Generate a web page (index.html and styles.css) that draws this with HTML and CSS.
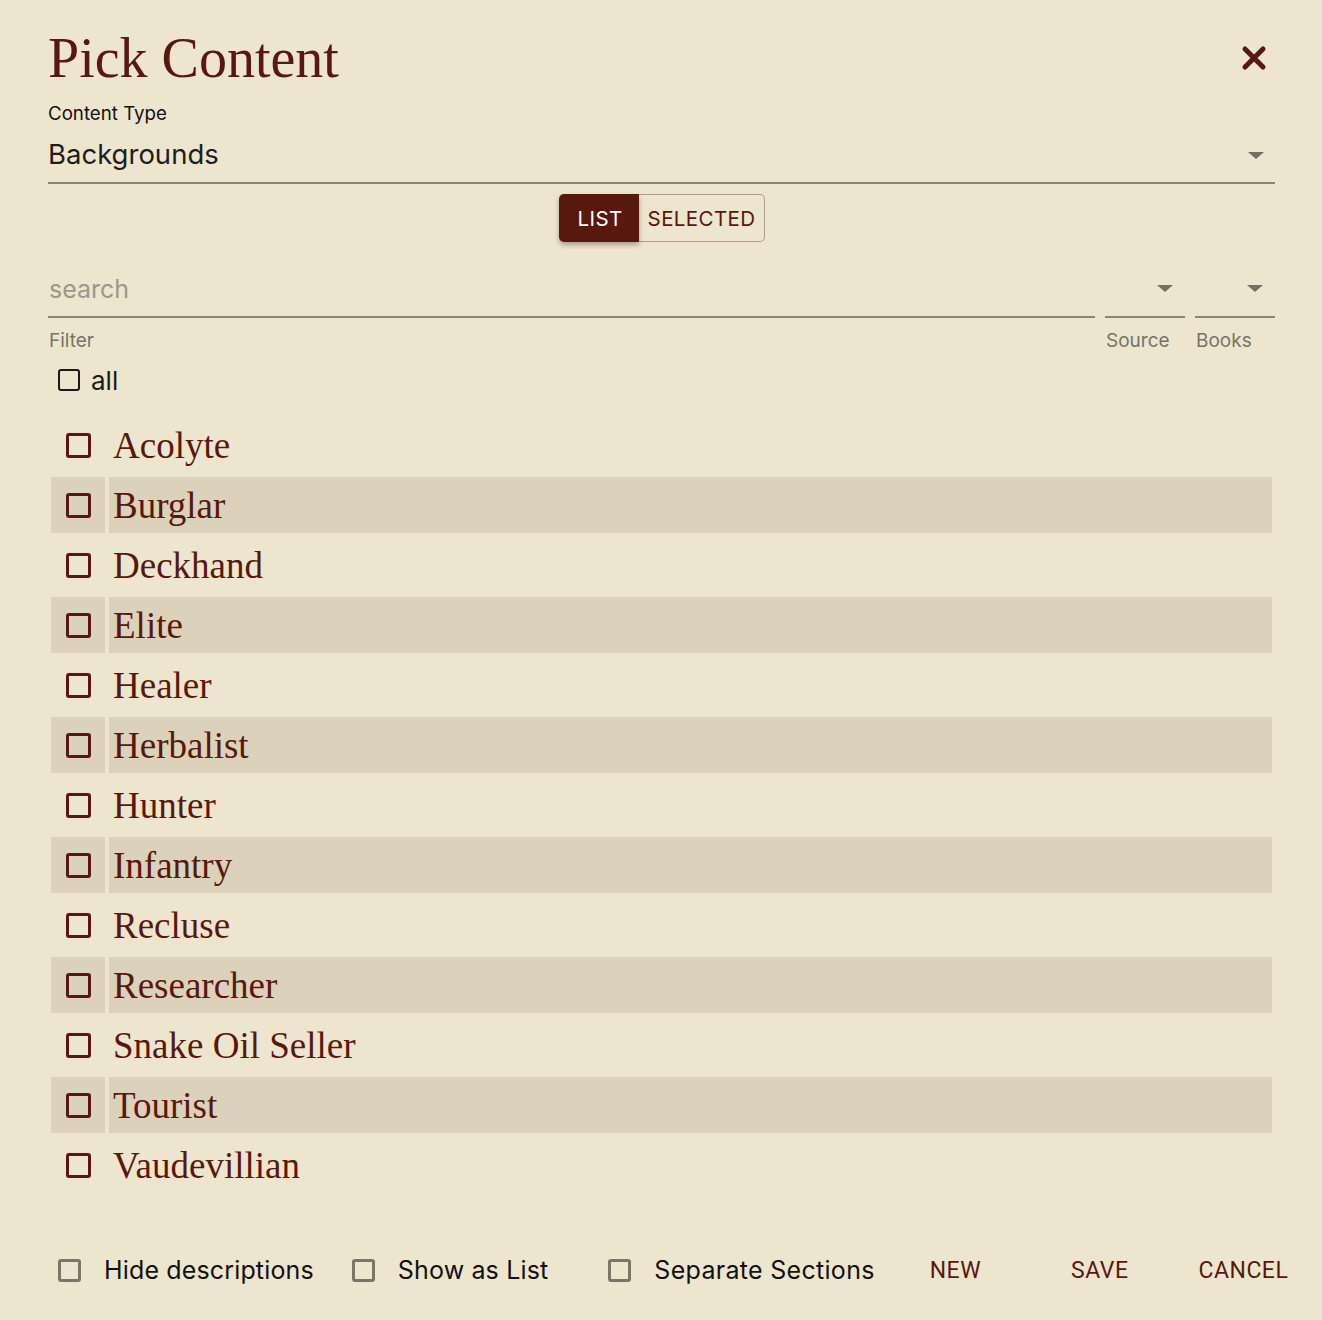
FILE: index.html
```html
<!DOCTYPE html>
<html>
<head>
<meta charset="utf-8">
<link rel="stylesheet" href="styles.css">
</head>
<body>
<div class="dialog">
  <div class="header">
    <h1 class="title">Pick Content</h1>
    <svg class="close" width="26" height="26" viewBox="0 0 26 26"><path d="M4 4 L22 22 M22 4 L4 22" stroke="#58180d" stroke-width="5" stroke-linecap="round"/></svg>
  </div>
  <div class="select-field">
    <div class="field-label">Content Type</div>
    <div class="select-row">
      <span class="select-value">Backgrounds</span>
      <span class="arrow"></span>
    </div>
  </div>
  <div class="toggle-wrap">
    <div class="toggle">
      <span class="tog tog-on">LIST</span>
      <span class="tog tog-off">SELECTED</span>
    </div>
  </div>
  <div class="filters">
    <div class="filter-col grow">
      <div class="input-row"><span class="placeholder">search</span></div>
      <div class="helper">Filter</div>
    </div>
    <div class="filter-col small">
      <div class="input-row end"><span class="arrow"></span></div>
      <div class="helper">Source</div>
    </div>
    <div class="filter-col small">
      <div class="input-row end"><span class="arrow"></span></div>
      <div class="helper">Books</div>
    </div>
  </div>
  <label class="all-row"><span class="box box-dark"></span><span class="all-text">all</span></label>
  <table class="items">
    <tbody>
      <tr><td class="c1"><span class="box box-red"></span></td><td class="c2">Acolyte</td></tr>
      <tr class="alt"><td class="c1"><span class="box box-red"></span></td><td class="c2">Burglar</td></tr>
      <tr><td class="c1"><span class="box box-red"></span></td><td class="c2">Deckhand</td></tr>
      <tr class="alt"><td class="c1"><span class="box box-red"></span></td><td class="c2">Elite</td></tr>
      <tr><td class="c1"><span class="box box-red"></span></td><td class="c2">Healer</td></tr>
      <tr class="alt"><td class="c1"><span class="box box-red"></span></td><td class="c2">Herbalist</td></tr>
      <tr><td class="c1"><span class="box box-red"></span></td><td class="c2">Hunter</td></tr>
      <tr class="alt"><td class="c1"><span class="box box-red"></span></td><td class="c2">Infantry</td></tr>
      <tr><td class="c1"><span class="box box-red"></span></td><td class="c2">Recluse</td></tr>
      <tr class="alt"><td class="c1"><span class="box box-red"></span></td><td class="c2">Researcher</td></tr>
      <tr><td class="c1"><span class="box box-red"></span></td><td class="c2">Snake Oil Seller</td></tr>
      <tr class="alt"><td class="c1"><span class="box box-red"></span></td><td class="c2">Tourist</td></tr>
      <tr><td class="c1"><span class="box box-red"></span></td><td class="c2">Vaudevillian</td></tr>
    </tbody>
  </table>
  <div class="footer">
    <label class="opt opt1"><span class="box box-gray"></span><span>Hide descriptions</span></label>
    <label class="opt opt2"><span class="box box-gray"></span><span>Show as List</span></label>
    <label class="opt opt3"><span class="box box-gray"></span><span class="wide">Separate Sections</span></label>
    <span class="btn btn-new">NEW</span>
    <span class="btn btn-save">SAVE</span>
    <span class="btn btn-cancel">CANCEL</span>
  </div>
</div>
</body>
</html>
```
FILE: styles.css
```css
html, body {
  margin: 0;
  padding: 0;
  background: #eee5ce;
}
body {
  font-family: Inter, Roboto, "Liberation Sans", sans-serif;
  color: #1a1a1a;
}
.dialog {
  width: 1322px;
  height: 1320px;
  box-sizing: border-box;
  padding: 27px 47px 0 48px;
  display: flex;
  flex-direction: column;
}
.header {
  display: flex;
  justify-content: space-between;
  align-items: center;
  height: 62px;
}
.title {
  margin: 0;
  font-family: "Liberation Serif", serif;
  font-weight: normal;
  font-size: 56px;
  line-height: 62px;
  color: #58180d;
}
.close {
  margin-right: 8px;
  margin-top: -1px;
}
.select-field {
  margin-top: 14px;
  border-bottom: 2px solid #8a8676;
}
.field-label {
  font-size: 18.7px;
  line-height: 22px;
  color: #111;
}
.select-row {
  display: flex;
  justify-content: space-between;
  align-items: center;
  height: 57px;
}
.select-value {
  font-size: 27.5px;
  color: #1d1d1d;
}
.select-row .arrow {
  margin-top: 4px;
}
.arrow {
  width: 0;
  height: 0;
  border-left: 8px solid transparent;
  border-right: 8px solid transparent;
  border-top: 7px solid #727064;
  margin-right: 11px;
}
.toggle-wrap {
  display: flex;
  justify-content: center;
  margin-top: 10px;
  padding-left: 1px;
}
.toggle {
  display: flex;
  height: 48px;
  border-radius: 5px;
}
.tog {
  display: flex;
  align-items: center;
  font-size: 20.5px;
  letter-spacing: 0.4px;
}
.tog-on {
  background: #58180d;
  color: #fff;
  padding: 0 16px 0 18px;
  border-radius: 5px 0 0 5px;
  box-shadow: 0 3px 5px rgba(0,0,0,0.3);
  position: relative;
}
.tog-off {
  color: #58180d;
  border: 1px solid #b59a88;
  border-left: none;
  border-radius: 0 5px 5px 0;
  padding: 0 8px 0 9px;
}
.filters {
  display: flex;
  gap: 10px;
  margin-top: 21px;
}
.filter-col.grow {
  flex: 1;
}
.filter-col.small {
  width: 80px;
}
.input-row {
  height: 55px;
  box-sizing: border-box;
  border-bottom: 2px solid #8a8676;
  display: flex;
  align-items: flex-end;
  padding-bottom: 12px;
}
.input-row.end {
  justify-content: flex-end;
  align-items: flex-start;
  padding-top: 22px;
  padding-bottom: 0;
}
.input-row.end .arrow {
  margin-right: 12px;
}
.placeholder {
  font-size: 25px;
  line-height: 30px;
  color: #9c978a;
  padding-left: 1px;
}
.helper {
  font-size: 19px;
  color: #76736a;
  margin-top: 12px;
  line-height: 22px;
  padding-left: 1px;
}
.all-row {
  display: flex;
  align-items: center;
  margin-top: 16px;
  margin-left: 10px;
  height: 24px;
}
.all-text {
  font-size: 26px;
  margin-left: 11px;
  color: #1a1a1a;
}
.box {
  display: inline-block;
  box-sizing: border-box;
  border-radius: 3px;
  flex: none;
}
.box-dark {
  width: 22px;
  height: 22px;
  border: 2px solid #1a1a1a;
}
.box-red {
  width: 25px;
  height: 25px;
  border: 3px solid #58180d;
  vertical-align: middle;
}
.box-gray {
  width: 23px;
  height: 23px;
  border: 3px solid #7a7668;
}
.items {
  border-collapse: separate;
  border-spacing: 4px;
  margin-top: 21px;
  margin-left: -1px;
  width: 1229px;
}
.items td {
  height: 56px;
  padding: 0;
}
.items .c1 {
  width: 54px;
  text-align: center;
}
.items .c2 {
  font-family: "Liberation Serif", serif;
  font-size: 37px;
  color: #58180d;
  padding-left: 4px;
}
.items tr.alt td {
  background: #dcd1ba;
}
.footer {
  display: flex;
  align-items: center;
  margin-top: 58px;
  margin-right: -60px;
  font-size: 25px;
  letter-spacing: 0.15px;
  white-space: nowrap;
}
.footer > * {
  flex: none;
}
.opt {
  display: flex;
  align-items: center;
  color: #111;
  gap: 23px;
}
.opt .wide {
  letter-spacing: 0.3px;
}
.opt1 { margin-left: 10px; }
.opt2 { margin-left: 38px; }
.opt3 { margin-left: 60px; }
.btn {
  color: #58180d;
  font-family: Roboto, "Liberation Sans", sans-serif;
  font-size: 23px;
  letter-spacing: 0.5px;
}
.btn-new { margin-left: 55px; }
.btn-save { margin-left: 90px; }
.btn-cancel { margin-left: 70px; }
```
